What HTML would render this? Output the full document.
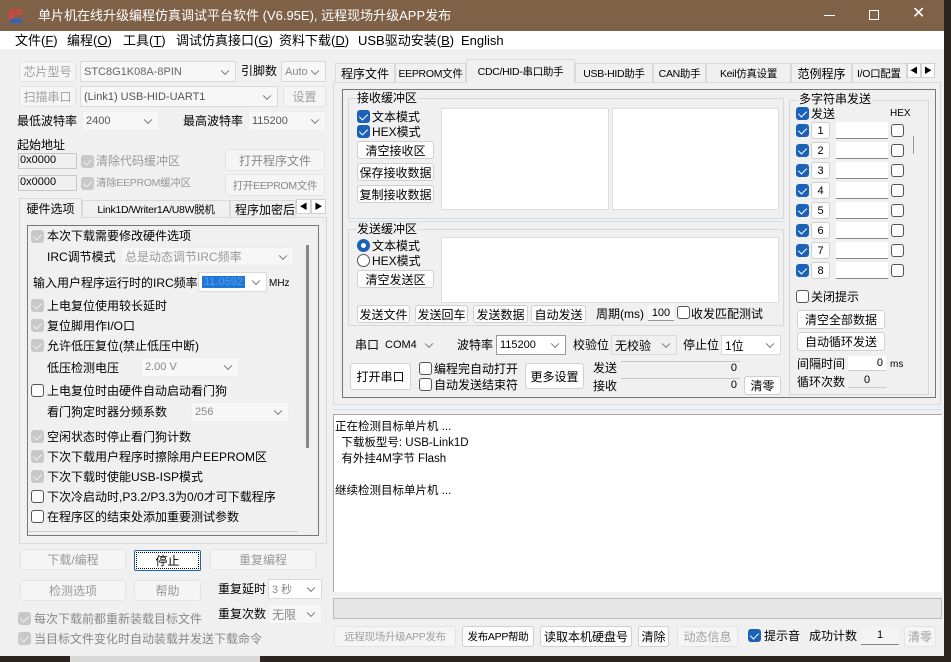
<!DOCTYPE html>
<html><head><meta charset="utf-8">
<style>
*{box-sizing:border-box;margin:0;padding:0}
body{width:951px;height:662px;overflow:hidden;background:#2b2420;font:12px "Liberation Sans","Noto Sans CJK SC",sans-serif;color:#000;position:relative}
.a{position:absolute;white-space:nowrap;line-height:1}
.win{position:absolute;left:0;top:0;width:944px;height:656px;background:#f0f0f0}
.btn{position:absolute;background:#fdfdfd;border:1px solid #d0d0d0;border-radius:3px;text-align:center;white-space:nowrap;display:flex;align-items:center;justify-content:center}
.dis{color:#a0a0a0;background:#f5f5f5;border-color:#e4e4e4}
.cmb{position:absolute;background:#fff;border:1px solid #d9d9d9;padding-left:3px;display:flex;align-items:center;white-space:nowrap;font-size:11px}
.cmb::after{content:"";position:absolute;right:7px;top:50%;width:5px;height:5px;border-right:1px solid #777;border-bottom:1px solid #777;transform:translateY(-70%) rotate(45deg)}
.cmb.g{background:#f7f7f7;color:#888;border-color:#eee}
.cb{position:absolute;width:13px;height:13px;border:1px solid #555;border-radius:3px;background:#fff}
.cb.on{background:#1a62b8;border-color:#1a62b8}
.cb.on::after{content:"";position:absolute;left:3px;top:1px;width:4px;height:7px;border:solid #fff;border-width:0 1.5px 1.5px 0;transform:rotate(45deg)}
.cb.gr{background:#c8c8c8;border-color:#c8c8c8}
.cb.gr::after{content:"";position:absolute;left:3px;top:1px;width:4px;height:7px;border:solid #eee;border-width:0 1.5px 1.5px 0;transform:rotate(45deg)}
.box{position:absolute;background:#fff;border:1px solid #bbb}
.grp{position:absolute;border:1px solid #d8d8d8}
.fld{position:absolute;background:#f0f0f0;border:1px solid #c8c8c8;text-align:right;padding-right:3px;font-size:11px;line-height:12px}
.tab{position:absolute;border:1px solid #d9d9d9;border-bottom:none;background:#f0f0f0;display:flex;align-items:center;justify-content:center;white-space:nowrap;overflow:hidden}
.sm{font-size:10.5px;letter-spacing:-0.3px}
</style></head><body>
<div class="win"></div>
<div class="a" style="left:0;top:0;width:944px;height:31px;background:#7f6147"></div>
<svg class="a" style="left:8px;top:8px" width="16" height="16"><path d="M2 14V4a10 10 0 0 1 12 0" stroke="#e04040" stroke-width="2" fill="none"/><path d="M4 14V7a7 7 0 0 1 9 0" stroke="#e04040" stroke-width="2" fill="none"/><rect x="2" y="11" width="12" height="4" fill="#3060c0"/></svg>
<div class="a" style="left:38px;top:9px;color:#fff;font-size:13px">单片机在线升级编程仿真调试平台软件 (V6.95E), 远程现场升级APP发布</div>
<div class="a" style="left:824px;top:15px;width:11px;height:1px;background:#fff"></div>
<div class="a" style="left:869px;top:10px;width:10px;height:10px;border:1px solid #fff"></div>
<div class="a" style="left:912px;top:6px;color:#fff;font-size:16px">✕</div>
<div class="a" style="left:0;top:31px;width:944px;height:18px;background:#fff"></div>
<div class="a" style="left:15px;top:34px;font-size:13px">文件(<u>F</u>)</div>
<div class="a" style="left:67px;top:34px;font-size:13px">编程(<u>O</u>)</div>
<div class="a" style="left:123px;top:34px;font-size:13px">工具(<u>T</u>)</div>
<div class="a" style="left:176px;top:34px;font-size:13px">调试仿真接口(<u>G</u>)</div>
<div class="a" style="left:279px;top:34px;font-size:13px">资料下载(<u>D</u>)</div>
<div class="a" style="left:358px;top:34px;font-size:13px">USB驱动安装(<u>B</u>)</div>
<div class="a" style="left:461px;top:34px;font-size:13px">English</div>

<div class="btn dis" style="left:19px;top:61px;width:57px;height:21px">芯片型号</div>
<div class="cmb" style="left:80px;top:61px;width:156px;height:21px;background:#f7f7f7;color:#666">STC8G1K08A-8PIN</div>
<div class="a" style="left:241px;top:65px">引脚数</div>
<div class="cmb" style="left:281px;top:61px;width:45px;height:21px;background:#f7f7f7;color:#888">Auto</div>
<div class="btn dis" style="left:19px;top:86px;width:57px;height:21px">扫描串口</div>
<div class="cmb" style="left:80px;top:86px;width:198px;height:21px;background:#f7f7f7;color:#555">(Link1) USB-HID-UART1</div>
<div class="btn dis" style="left:283px;top:86px;width:43px;height:21px">设置</div>
<div class="a" style="left:17px;top:115px">最低波特率</div>
<div class="cmb g" style="left:82px;top:111px;width:77px;height:20px;color:#555">2400</div>
<div class="a" style="left:183px;top:115px">最高波特率</div>
<div class="cmb g" style="left:248px;top:111px;width:78px;height:20px;color:#555">115200</div>
<div class="a" style="left:17px;top:139px">起始地址</div>
<div class="fld" style="left:18px;top:153px;width:59px;height:16px;text-align:left;padding-left:1px">0x0000</div>
<div class="cb gr" style="left:81px;top:155px"></div>
<div class="a" style="left:96px;top:155px;color:#999">清除代码缓冲区</div>
<div class="btn dis" style="left:225px;top:149px;width:100px;height:22px;color:#888">打开程序文件</div>
<div class="fld" style="left:18px;top:175px;width:59px;height:16px;text-align:left;padding-left:1px">0x0000</div>
<div class="cb gr" style="left:81px;top:177px"></div>
<div class="a sm" style="left:96px;top:178px;color:#999">清除EEPROM缓冲区</div>
<div class="btn dis sm" style="left:225px;top:174px;width:100px;height:22px;color:#888">打开EEPROM文件</div>
<div class="a" style="left:19px;top:217px;width:308px;height:327px;border:1px solid #d9d9d9;background:#f0f0f0"></div>
<div class="tab" style="left:19px;top:198px;width:63px;height:20px;z-index:2">硬件选项</div>
<div class="tab sm" style="left:82px;top:200px;width:148px;height:17px">Link1D/Writer1A/U8W脱机</div>
<div class="tab" style="left:230px;top:200px;width:66px;height:17px;justify-content:flex-start;padding-left:4px">程序加密后</div>
<div class="btn" style="left:296px;top:199px;width:15px;height:15px;border-radius:0;font-size:8px">◀</div>
<div class="btn" style="left:311px;top:199px;width:15px;height:15px;border-radius:0;font-size:8px">▶</div>
<div class="a" style="left:27px;top:225px;width:292px;height:311px;border:1px solid #777"></div>
<div class="a" style="left:306px;top:245px;width:3px;height:203px;background:#888"></div>
<div class="a" style="left:28px;top:531px;width:270px;height:1px;background:#ccc"></div>

<div class="cb gr" style="left:31px;top:230px"></div><div class="a" style="left:47px;top:230px">本次下载需要修改硬件选项</div>
<div class="a" style="left:47px;top:251px">IRC调节模式</div>
<div class="cmb g" style="left:121px;top:247px;width:173px;height:19px;font-size:12px;color:#999">总是动态调节IRC频率</div>
<div class="a" style="left:33px;top:277px">输入用户程序运行时的IRC频率</div>
<div class="cmb" style="left:198px;top:272px;width:69px;height:20px"><span style="background:#1e78d8;color:#5a9ae0;padding:0 2px">11.0592</span></div>
<div class="a" style="left:269px;top:279px;font-size:10px">MHz</div>
<div class="cb gr" style="left:31px;top:299px"></div><div class="a" style="left:47px;top:300px">上电复位使用较长延时</div>
<div class="cb gr" style="left:31px;top:319px"></div><div class="a" style="left:47px;top:320px">复位脚用作I/O口</div>
<div class="cb gr" style="left:31px;top:339px"></div><div class="a" style="left:47px;top:340px">允许低压复位(禁止低压中断)</div>
<div class="a" style="left:47px;top:362px">低压检测电压</div>
<div class="cmb g" style="left:141px;top:357px;width:98px;height:20px">2.00 V</div>
<div class="cb" style="left:31px;top:384px"></div><div class="a" style="left:47px;top:385px">上电复位时由硬件自动启动看门狗</div>
<div class="a" style="left:47px;top:406px">看门狗定时器分频系数</div>
<div class="cmb g" style="left:191px;top:402px;width:98px;height:20px">256</div>
<div class="cb gr" style="left:31px;top:430px"></div><div class="a" style="left:47px;top:431px">空闲状态时停止看门狗计数</div>
<div class="cb gr" style="left:31px;top:450px"></div><div class="a" style="left:47px;top:451px">下次下载用户程序时擦除用户EEPROM区</div>
<div class="cb gr" style="left:31px;top:470px"></div><div class="a" style="left:47px;top:471px">下次下载时使能USB-ISP模式</div>
<div class="cb" style="left:31px;top:490px"></div><div class="a" style="left:47px;top:491px">下次冷启动时,P3.2/P3.3为0/0才可下载程序</div>
<div class="cb" style="left:31px;top:510px"></div><div class="a" style="left:47px;top:511px">在程序区的结束处添加重要测试参数</div>

<div class="btn dis" style="left:20px;top:549px;width:106px;height:21px;color:#999">下载/编程</div>
<div class="btn" style="left:134px;top:550px;width:67px;height:21px;border:1px solid #1a62b8;border-radius:2px;outline:1px dotted #000;outline-offset:-3px">停止</div>
<div class="btn dis" style="left:210px;top:549px;width:106px;height:21px;color:#999">重复编程</div>
<div class="btn dis" style="left:20px;top:580px;width:106px;height:21px;color:#999">检测选项</div>
<div class="btn dis" style="left:134px;top:580px;width:67px;height:21px;color:#999">帮助</div>
<div class="a" style="left:218px;top:583px">重复延时</div>
<div class="cmb" style="left:268px;top:579px;width:54px;height:20px;color:#888">3 秒</div>
<div class="a" style="left:218px;top:608px">重复次数</div>
<div class="cmb g" style="left:268px;top:604px;width:54px;height:20px;font-size:12px">无限</div>
<div class="cb gr" style="left:18px;top:612px"></div><div class="a" style="left:34px;top:613px;color:#888">每次下载前都重新装载目标文件</div>
<div class="cb gr" style="left:18px;top:632px"></div><div class="a" style="left:34px;top:633px;color:#888">当目标文件变化时自动装载并发送下载命令</div>

<div class="a" style="left:333px;top:82px;width:608px;height:323px;border:1px solid #d9d9d9"></div>
<div class="tab" style="left:335px;top:63px;width:60px;height:19px">程序文件</div>
<div class="tab sm" style="left:395px;top:63px;width:71px;height:19px">EEPROM文件</div>
<div class="tab sm" style="left:466px;top:59px;width:109px;height:24px;z-index:2">CDC/HID-串口助手</div>
<div class="tab sm" style="left:575px;top:63px;width:78px;height:19px">USB-HID助手</div>
<div class="tab sm" style="left:653px;top:63px;width:53px;height:19px">CAN助手</div>
<div class="tab sm" style="left:706px;top:63px;width:85px;height:19px">Keil仿真设置</div>
<div class="tab" style="left:791px;top:63px;width:61px;height:19px">范例程序</div>
<div class="tab sm" style="left:852px;top:63px;width:55px;height:19px;justify-content:flex-start;padding-left:4px">I/O口配置</div>
<div class="btn" style="left:907px;top:63px;width:14px;height:15px;border-radius:0;font-size:8px">◀</div>
<div class="btn" style="left:921px;top:63px;width:14px;height:15px;border-radius:0;font-size:8px">▶</div>
<div class="a" style="left:342px;top:89px;width:594px;height:309px;border:1px solid #777"></div>

<div class="grp" style="left:348px;top:98px;width:436px;height:121px"></div>
<div class="a" style="left:356px;top:92px;background:#f0f0f0;padding:0 1px">接收缓冲区</div>
<div class="cb on" style="left:357px;top:110px"></div><div class="a" style="left:372px;top:111px">文本模式</div>
<div class="cb on" style="left:357px;top:125px"></div><div class="a" style="left:372px;top:126px">HEX模式</div>
<div class="btn" style="left:357px;top:141px;width:77px;height:18px">清空接收区</div>
<div class="btn" style="left:357px;top:163px;width:77px;height:18px">保存接收数据</div>
<div class="btn" style="left:357px;top:185px;width:77px;height:18px">复制接收数据</div>
<div class="box" style="left:441px;top:108px;width:168px;height:102px;border-color:#ddd"></div>
<div class="box" style="left:612px;top:108px;width:167px;height:102px;border-color:#ddd"></div>
<div class="a" style="left:347px;top:221px;width:438px;height:1px;background:#cce4f0"></div>
<div class="grp" style="left:348px;top:229px;width:436px;height:97px"></div>
<div class="a" style="left:356px;top:223px;background:#f0f0f0;padding:0 1px">发送缓冲区</div>
<div class="cb" style="left:357px;top:239px;border-radius:50%;border:4px solid #1a62b8"></div><div class="a" style="left:372px;top:240px">文本模式</div>
<div class="cb" style="left:357px;top:254px;border-radius:50%"></div><div class="a" style="left:372px;top:255px">HEX模式</div>
<div class="btn" style="left:357px;top:270px;width:77px;height:18px">清空发送区</div>
<div class="box" style="left:441px;top:237px;width:338px;height:66px;border-color:#ddd"></div>
<div class="btn" style="left:357px;top:305px;width:53px;height:18px">发送文件</div>
<div class="btn" style="left:415px;top:305px;width:53px;height:18px">发送回车</div>
<div class="btn" style="left:473px;top:305px;width:55px;height:18px">发送数据</div>
<div class="btn" style="left:531px;top:305px;width:55px;height:18px">自动发送</div>
<div class="a" style="left:596px;top:308px">周期(ms)</div>
<div class="a" style="left:648px;top:305px;width:26px;height:16px;border-bottom:1px solid #999;background:#f8f8f8;text-align:center;line-height:16px;font-size:11px">100</div>
<div class="cb" style="left:677px;top:306px"></div><div class="a" style="left:691px;top:308px">收发匹配测试</div>
<div class="a" style="left:355px;top:339px">串口</div>
<div class="cmb" style="left:381px;top:335px;width:59px;height:20px;background:#f0f0f0;border-color:#f0f0f0">COM4</div>
<div class="a" style="left:457px;top:339px">波特率</div>
<div class="cmb" style="left:496px;top:335px;width:70px;height:20px;border-color:#999">115200</div>
<div class="a" style="left:573px;top:339px">校验位</div>
<div class="cmb" style="left:611px;top:335px;width:66px;height:20px;background:#f0f0f0;font-size:12px">无校验</div>
<div class="a" style="left:683px;top:339px">停止位</div>
<div class="cmb" style="left:721px;top:335px;width:60px;height:20px;font-size:12px">1位</div>
<div class="btn" style="left:350px;top:363px;width:61px;height:27px">打开串口</div>
<div class="cb" style="left:419px;top:362px"></div><div class="a" style="left:434px;top:363px">编程完自动打开</div>
<div class="cb" style="left:419px;top:378px"></div><div class="a" style="left:434px;top:379px">自动发送结束符</div>
<div class="btn" style="left:525px;top:363px;width:59px;height:26px">更多设置</div>
<div class="a" style="left:593px;top:362px">发送</div>
<div class="fld" style="left:621px;top:361px;width:119px;height:13px;border-width:1px 0 0 0">0</div>
<div class="a" style="left:593px;top:380px">接收</div>
<div class="fld" style="left:621px;top:378px;width:119px;height:14px;border-width:1px 0 0 0">0</div>
<div class="btn" style="left:744px;top:376px;width:37px;height:19px">清零</div>
<div class="grp" style="left:789px;top:100px;width:140px;height:295px"></div>
<div class="a" style="left:798px;top:93px;background:#f0f0f0;padding:0 1px">多字符串发送</div>
<div class="cb on" style="left:796px;top:107px"></div><div class="a" style="left:811px;top:108px">发送</div>
<div class="a" style="left:890px;top:109px;font-size:10px">HEX</div>
<div class="a" style="left:913px;top:136px;width:1px;height:18px;background:#999"></div>
<div id="rows"></div>
<div class="cb" style="left:796px;top:290px"></div><div class="a" style="left:811px;top:291px">关闭提示</div>
<div class="btn" style="left:797px;top:310px;width:88px;height:19px">清空全部数据</div>
<div class="btn" style="left:797px;top:332px;width:88px;height:19px">自动循环发送</div>
<div class="a" style="left:797px;top:358px">间隔时间</div>
<div class="a" style="left:848px;top:356px;width:38px;height:15px;background:#fff;border-bottom:1px solid #ccc;text-align:right;padding-right:3px;font-size:11px;line-height:14px">0</div>
<div class="a" style="left:890px;top:360px;font-size:10px">ms</div>
<div class="a" style="left:797px;top:376px">循环次数</div>
<div class="a" style="left:848px;top:373px;width:38px;height:15px;background:#f0f0f0;border-bottom:1px solid #ccc;text-align:center;font-size:11px;line-height:14px">0</div>

<div class="a" style="left:333px;top:409px;width:608px;height:1px;background:#cce4f0"></div>
<div class="a" style="left:333px;top:414px;width:609px;height:178px;background:#fff;border:1px solid #aaa;border-right:none;border-bottom:none"></div>
<div class="a" style="left:335px;top:419px;line-height:16px;white-space:pre;font-size:11.5px">正在检测目标单片机 ...
  下载板型号: USB-Link1D
  有外挂4M字节 Flash

继续检测目标单片机 ...</div>
<div class="a" style="left:333px;top:598px;width:609px;height:21px;background:#e6e6e6;border:1px solid #bcbcbc"></div>
<div class="btn dis sm" style="left:334px;top:626px;width:122px;height:21px">远程现场升级APP发布</div>
<div class="btn sm" style="left:462px;top:626px;width:72px;height:21px">发布APP帮助</div>
<div class="btn" style="left:540px;top:626px;width:92px;height:21px">读取本机硬盘号</div>
<div class="btn" style="left:638px;top:626px;width:31px;height:21px">清除</div>
<div class="btn dis" style="left:677px;top:626px;width:61px;height:21px">动态信息</div>
<div class="cb on" style="left:748px;top:629px"></div><div class="a" style="left:764px;top:630px">提示音</div>
<div class="a" style="left:809px;top:630px">成功计数</div>
<div class="a" style="left:861px;top:627px;width:38px;height:18px;background:#f3f3f3;border-bottom:1px solid #888;text-align:center;line-height:17px;font-size:11px">1</div>
<div class="btn dis" style="left:904px;top:626px;width:32px;height:21px">清零</div>
<div class="a" style="left:0;top:656px;width:951px;height:6px;background:#2b2420"></div>
<div class="a" style="left:70px;top:656px;width:190px;height:6px;background:#d8d8d8"></div>
<script>
var h='';for(var i=0;i<8;i++){var y=122+i*20;
h+='<div class="cb on" style="left:796px;top:'+(y+2)+'px"></div>'+
'<div class="btn" style="left:811px;top:'+y+'px;width:19px;height:17px;font-size:11px">'+(i+1)+'</div>'+
'<div class="a" style="left:836px;top:'+y+'px;width:52px;height:17px;background:#fff;border-bottom:1px solid #888"></div>'+
'<div class="cb" style="left:891px;top:'+(y+2)+'px"></div>';}
document.getElementById('rows').outerHTML=h;
</script>
</body></html>
